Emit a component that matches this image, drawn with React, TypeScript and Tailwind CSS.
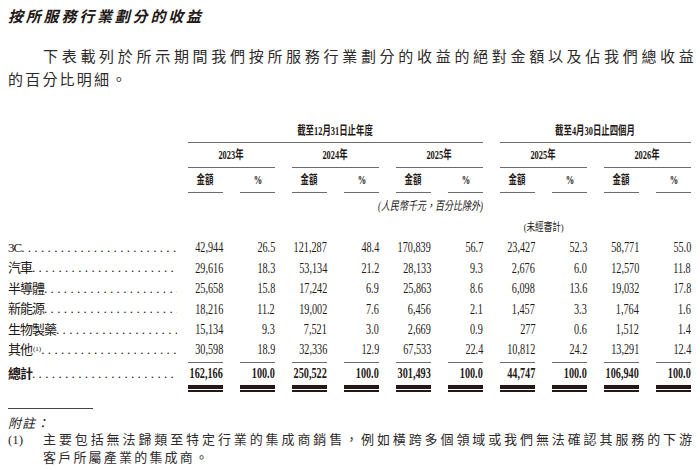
import React from "react";

type Row = {
	label: string;
	note?: string;
	values: string[];
};

const rows: Row[] = [
	{ label: "3C", values: ["42,944", "26.5", "121,287", "48.4", "170,839", "56.7", "23,427", "52.3", "58,771", "55.0"] },
	{ label: "汽車", values: ["29,616", "18.3", "53,134", "21.2", "28,133", "9.3", "2,676", "6.0", "12,570", "11.8"] },
	{ label: "半導體", values: ["25,658", "15.8", "17,242", "6.9", "25,863", "8.6", "6,098", "13.6", "19,032", "17.8"] },
	{ label: "新能源", values: ["18,216", "11.2", "19,002", "7.6", "6,456", "2.1", "1,457", "3.3", "1,764", "1.6"] },
	{ label: "生物製藥", values: ["15,134", "9.3", "7,521", "3.0", "2,669", "0.9", "277", "0.6", "1,512", "1.4"] },
];

const other: Row = {
	label: "其他",
	note: "(1)",
	values: ["30,598", "18.9", "32,336", "12.9", "67,533", "22.4", "10,812", "24.2", "13,291", "12.4"],
};

const total = ["162,166", "100.0", "250,522", "100.0", "301,493", "100.0", "44,747", "100.0", "106,940", "100.0"];

const years = ["2023年", "2024年", "2025年", "2025年", "2026年"];

const dots = ".".repeat(40);

function Label({ text, note, bold }: { text: string; note?: string; bold?: boolean }) {
	return (
		<div className={`flex items-center w-[169px] text-[13px] ${bold ? "font-bold" : ""}`}>
			<span className="shrink-0 tracking-[-1px] whitespace-nowrap">
				{text}
				{note && <sup className="text-[7px] tracking-normal ml-[1px]">{note}</sup>}
			</span>
			<span className="flex-1 min-w-0 overflow-hidden whitespace-nowrap tracking-[3.35px] font-normal">
				{dots}
			</span>
		</div>
	);
}

function Num({ value, bold }: { value: string; bold?: boolean }) {
	return (
		<span className={`inline-block origin-right scale-x-[0.68] whitespace-nowrap text-[15px] ${bold ? "font-bold" : ""}`}>
			{value}
		</span>
	);
}

export default function App() {
	return (
		<main className="w-[700px] h-[470px] overflow-hidden bg-white text-[#231815] font-['Liberation_Serif','Noto_Sans_CJK_TC',serif]">
			<h2 className="pt-[8px] pl-[8px] text-[15px] leading-[18px] font-bold italic tracking-[2.8px] whitespace-nowrap">
				按所服務行業劃分的收益
			</h2>

			<p className="mt-[20px] pl-[8px] text-[15px] leading-[23px] text-[#2e2a2b] whitespace-nowrap">
				<span className="block pl-[35px] tracking-[3.7px]">
					下表載列於所示期間我們按所服務行業劃分的收益的絕對金額以及佔我們總收益
				</span>
				<span className="block tracking-[2.2px]">的百分比明細。</span>
			</p>

			<div className="mt-[27px] px-[8px] grid grid-cols-[163px_repeat(10,35px)] gap-x-[17px]">
				{/* period headers */}
				<div />
				<div className="col-span-6 h-[24px] flex items-center justify-center border-b border-[#6b6b6b]">
					<span className="inline-block scale-x-[0.7] whitespace-nowrap text-[12px] font-bold">
						截至12月31日止年度
					</span>
				</div>
				<div className="col-span-4 h-[24px] flex items-center justify-center border-b border-[#6b6b6b]">
					<span className="inline-block scale-x-[0.7] whitespace-nowrap text-[12px] font-bold">
						截至4月30日止四個月
					</span>
				</div>

				<div />
				{years.map((y, i) => (
					<div
						key={i}
						className="col-span-2 h-[25px] flex items-center justify-center border-b border-[#6b6b6b]"
					>
						<span className="inline-block scale-x-[0.7] whitespace-nowrap text-[12px] font-bold">{y}</span>
					</div>
				))}

				<div />
				{Array.from({ length: 10 }).map((_, i) => (
					<div key={i} className="h-[25px] flex items-center justify-center border-b border-[#6b6b6b]">
						<span className="inline-block scale-x-[0.7] whitespace-nowrap text-[12px] font-bold">
							{i % 2 === 0 ? "金額" : "%"}
						</span>
					</div>
				))}

				<div />
				<div className="col-span-6 h-[25px] flex items-center justify-end">
					<span className="inline-block origin-right scale-x-[0.75] whitespace-nowrap text-[12px] italic">
						(人民幣千元，百分比除外)
					</span>
				</div>
				<div className="col-span-4" />

				<div />
				<div className="col-span-6" />
				<div className="col-span-2 h-[19px] flex items-center justify-center">
					<span className="inline-block scale-x-[0.78] whitespace-nowrap text-[11px]">(未經審計)</span>
				</div>
				<div className="col-span-2" />

				{/* data rows */}
				{rows.map((r) => (
					<React.Fragment key={r.label}>
						<div className="h-[20.5px] flex items-center">
							<Label text={r.label} />
						</div>
						{r.values.map((v, i) => (
							<div key={i} className="h-[20.5px] flex items-center justify-end">
								<Num value={v} />
							</div>
						))}
					</React.Fragment>
				))}

				<div className="h-[23px] pb-[2.5px] flex items-center">
					<Label text={other.label} note={other.note} />
				</div>
				{other.values.map((v, i) => (
					<div key={i} className="h-[23px] pb-[2.5px] flex items-center justify-end border-b border-[#6b6b6b]">
						<Num value={v} />
					</div>
				))}

				<div className="h-[22px] flex items-center">
					<Label text="總計" bold />
				</div>
				{total.map((v, i) => (
					<div key={i} className="flex flex-col">
						<div className="h-[22px] flex items-center justify-end">
							<Num value={v} bold />
						</div>
						<div className="h-[4px] bg-[#231815]" />
						<div className="mt-[1.5px] h-[1.5px] bg-[#231815]" />
					</div>
				))}
			</div>

			<div className="mt-[16px] ml-[8px] w-[85px] h-px bg-[#444]" />

			<div className="mt-[8px] px-[8px] text-[13px] text-[#2e2a2b]">
				<p className="leading-[14px] italic tracking-[1px]">附註：</p>
				<div className="flex leading-[18px]">
					<span className="w-[35px] shrink-0">(1)</span>
					<div className="whitespace-nowrap">
						<span className="block tracking-[2.9px]">
							主要包括無法歸類至特定行業的集成商銷售，例如橫跨多個領域或我們無法確認其服務的下游
						</span>
						<span className="block tracking-[2.2px]">客戶所屬產業的集成商。</span>
					</div>
				</div>
			</div>
		</main>
	);
}
